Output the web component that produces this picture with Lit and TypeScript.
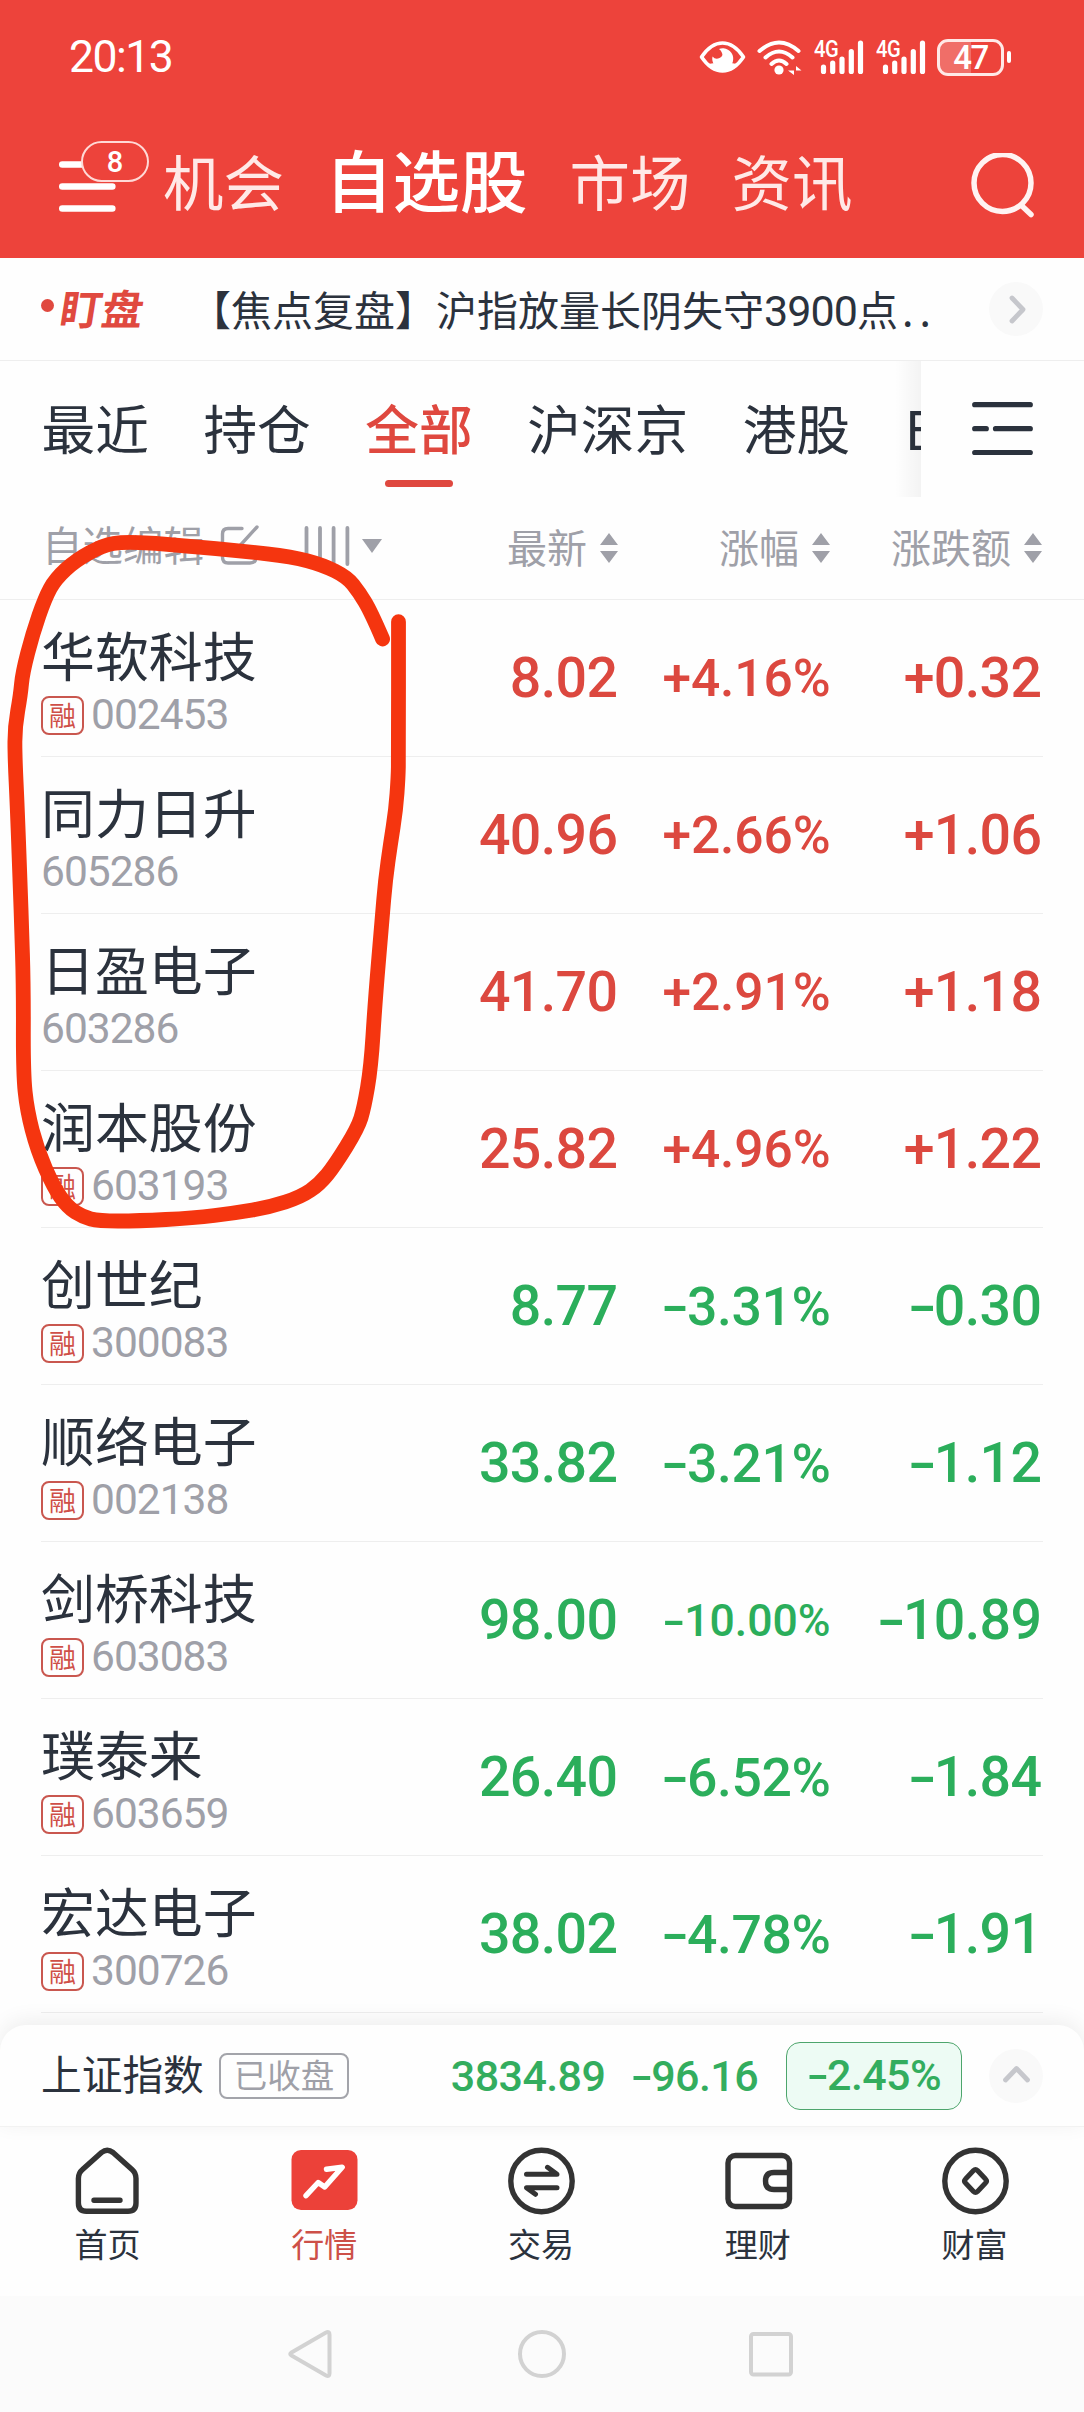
import { LitElement, html, css, svg, nothing } from "lit";
import { customElement, property } from "lit/decorators.js";
import { classMap } from "lit/directives/class-map.js";

interface Stock {
  name: string;
  code: string;
  margin: boolean;
  price: string;
  pct: string;
  diff: string;
}

const STOCKS: Stock[] = [
  { name: "华软科技", code: "002453", margin: true, price: "8.02", pct: "+4.16%", diff: "+0.32" },
  { name: "同力日升", code: "605286", margin: false, price: "40.96", pct: "+2.66%", diff: "+1.06" },
  { name: "日盈电子", code: "603286", margin: false, price: "41.70", pct: "+2.91%", diff: "+1.18" },
  { name: "润本股份", code: "603193", margin: true, price: "25.82", pct: "+4.96%", diff: "+1.22" },
  { name: "创世纪", code: "300083", margin: true, price: "8.77", pct: "-3.31%", diff: "-0.30" },
  { name: "顺络电子", code: "002138", margin: true, price: "33.82", pct: "-3.21%", diff: "-1.12" },
  { name: "剑桥科技", code: "603083", margin: true, price: "98.00", pct: "-10.00%", diff: "-10.89" },
  { name: "璞泰来", code: "603659", margin: true, price: "26.40", pct: "-6.52%", diff: "-1.84" },
  { name: "宏达电子", code: "300726", margin: true, price: "38.02", pct: "-4.78%", diff: "-1.91" },
];

/* Freehand marker points, in page coordinates. */
const MARKER: [number, number][] = [
  [382.6, 639], [371, 612], [359, 592], [347, 577], [323, 565], [292, 556.7], [242, 551], [190, 546.3],
  [155.5, 543.3], [123, 542], [103.7, 545], [76, 560], [55.3, 579], [45, 598], [32.8, 633.3],
  [22.5, 673], [20.5, 695], [14.9, 726.7], [14.9, 757], [17.3, 807], [20.7, 900], [21.4, 920],
  [23.5, 987], [23.2, 1073], [27, 1110], [37.3, 1150], [53.6, 1187], [67.4, 1207], [83, 1217],
  [98.5, 1221], [138, 1221], [193.6, 1218], [235, 1213], [270, 1207], [300.7, 1197], [319.7, 1184],
  [335, 1165], [357.8, 1128], [364, 1108], [371, 1067], [375, 1003], [382, 920], [385.4, 880],
  [390.6, 843], [395.8, 810], [398.2, 777], [398.5, 757], [398.5, 621.7],
];

function smooth(points: [number, number][]): string {
  let d = `M${points[0][0]} ${points[0][1]}`;
  for (let i = 1; i < points.length - 1; i++) {
    const [x, y] = points[i];
    const [nx, ny] = points[i + 1];
    d += `Q${x} ${y} ${(x + nx) / 2} ${(y + ny) / 2}`;
  }
  const last = points[points.length - 1];
  return d + `L${last[0]} ${last[1]}`;
}

const CJK = css`"Noto Sans CJK SC", sans-serif`;
const NUM = css`Roboto, "Noto Sans CJK SC", sans-serif`;

/* The hyphen is widened so that it reads as a minus sign. */
const MINUS = css`
  .minus { display: inline-block; margin-left: 0.14em; transform: scaleX(1.5); transform-origin: 85% 50%; }
`;

function signed(value: string) {
  return value.startsWith("-") ? html`<span><span class="minus">-</span>${value.slice(1)}</span>` : html`<span>${value}</span>`;
}

@customElement("status-bar")
class StatusBar extends LitElement {
  static styles = css`
    :host { display: flex; align-items: center; height: 114px; padding: 0 73px 0 69px; color: #fff; font-family: ${NUM}; }
    .time { flex: 1; font-size: 44.5px; letter-spacing: -1.5px; line-height: 60px; }
    .eye { margin-right: 11px; }
    .signal { display: flex; align-items: flex-start; height: 36px; position: relative; width: 51px; margin-left: 11px; }
    .gen { position: absolute; left: 1px; top: -2px; font: 500 24px/24px Roboto, sans-serif; letter-spacing: -0.5px; transform: scaleX(0.84); transform-origin: 0 0; }
    .battery { display: flex; align-items: center; margin-left: 11px; }
    .cell { box-sizing: border-box; width: 67px; height: 37px; border: 3px solid #ffe9e7; border-radius: 11px; text-align: center;
      font: 500 33px/32px Roboto, sans-serif; letter-spacing: -1.5px; background: linear-gradient(90deg, #f06e68 31px, transparent 31px); }
    .tip { width: 4px; height: 12px; margin-left: 3px; border-radius: 2px; background: #fff; }
    svg { display: block; }
  `;

  private signal() {
    return html`<div class="signal">
      <svg width="51" height="36" viewBox="0 0 51 36" stroke="#fff" stroke-width="5.2" stroke-linecap="round">
        <path d="M10.5 28v4.4M19.7 24v8.4M29 20v12.4M38.3 12.5v19.9M47.5 4v28.4" />
      </svg>
      <span class="gen">4G</span>
    </div>`;
  }

  render() {
    return html`
      <div class="time">20:13</div>
      <svg class="eye" width="47" height="36" viewBox="0 0 47 36">
        <path d="M2.5 18Q12 4 23.5 4T44.500 18Q35 32 23.500 32T2.500 18Z" fill="none" stroke="#fff" stroke-width="3.600" stroke-linejoin="round" />
        <path d="M20 10a10.500 10.500 0 1 1-6.500 7.500q3 3.500 7 1.500t2.500-5q-.8-2.500-3-4Z" fill="#fff" />
        <path d="M9 25q14.500 12 29 0l-6-1H16Z" fill="#fff" />
      </svg>
      <svg width="45" height="36" viewBox="0 0 45 36" fill="none" stroke="#fff" stroke-width="4" stroke-linecap="round">
        <path d="M2.500 12Q22 -5 41.500 12M8.500 18.500Q22 6.500 35.500 18.500M14.500 25Q22 18 29.500 25" />
        <circle cx="22" cy="31" r="4.600" fill="#fff" stroke="none" />
        <path d="M37 27v9l-6-4.500h6ZM39 36v-9l5.500 4.500H39Z" fill="#fff" stroke="none" />
      </svg>
      ${this.signal()} ${this.signal()}
      <div class="battery"><div class="cell">47</div><div class="tip"></div></div>
    `;
  }
}

@customElement("top-nav")
class TopNav extends LitElement {
  static styles = css`
    :host { display: flex; align-items: center; height: 144px; padding: 0 49px 0 57px; font-family: ${CJK}; color: #ffe9e7; }
    .menu { position: relative; width: 92px; height: 72px; margin-right: 14px; }
    .menu svg { display: block; margin-top: 9px; }
    .badge { position: absolute; left: 24px; top: -9px; box-sizing: border-box; width: 68px; height: 41px; border: 2px solid #ffd9d6;
      border-radius: 21px; background: #ed433b; color: #fff; text-align: center; font: 500 29px/38px Roboto, sans-serif; }
    .item { font-size: 60.5px; line-height: 80px; white-space: nowrap; margin-top: -12px; }
    .i0 { margin-right: 41px; }
    .i1 { margin-right: 42px; font-size: 67.5px; font-weight: 500; color: #fff; margin-top: -16px; }
    .i2 { margin-right: 41px; }
    .search { display: block; margin-left: auto; }
  `;

  render() {
    return html`
      <div class="menu">
        <svg width="62" height="58" viewBox="0 0 62 58" stroke="#fff" stroke-width="6.600" stroke-linecap="round">
          <path d="M5.300 5.500h50M5.300 27.500h50M5.300 49.500h50" />
        </svg>
        <div class="badge">8</div>
      </div>
      ${["机会", "自选股", "市场", "资讯"].map((t, i) => html`<div class="item i${i}">${t}</div>`)}
      <svg class="search" width="66" height="66" viewBox="0 0 66 66" fill="none" stroke="#fff3f2" stroke-linecap="round">
        <circle cx="33.500" cy="30" r="28.500" stroke-width="5.500" />
        <path d="M53 53l9 8.500" stroke-width="5.500" />
      </svg>
    `;
  }
}

@customElement("news-strip")
class NewsStrip extends LitElement {
  static styles = css`
    :host { display: flex; align-items: center; box-sizing: border-box; height: 103px; padding: 0 41px; border-bottom: 1px solid #eee; font-family: ${CJK}; }
    .dot { width: 13px; height: 13px; border-radius: 50%; background: #e0493f; margin: -8px 7px 0 0; }
    .tag { width: 85px; font-size: 41.5px; font-weight: 700; line-height: 60px; color: #e0493f; transform: skewX(-9deg); margin-top: -4px; }
    .text { flex: 1; margin-left: 44px; font-size: 41px; line-height: 60px; color: #2b323d; white-space: nowrap; margin-top: -3px; }
    .num { font-family: Roboto, sans-serif; font-size: 43px; letter-spacing: -0.9px; line-height: 1; }
    .dots { letter-spacing: 6px; margin-left: 4px; }
    svg { display: block; }
  `;

  render() {
    return html`
      <div class="dot"></div>
      <div class="tag">盯盘</div>
      <div class="text">【焦点复盘】沪指放量长阴失守<span class="num">3900</span>点<span class="dots">..</span></div>
      <svg width="54" height="54" viewBox="0 0 54 54" fill="none">
        <circle cx="27" cy="27" r="27" fill="#f9f9f9" />
        <path d="M23 16l11 11.500L23 39" stroke="#c6c7cc" stroke-width="4.800" stroke-linecap="round" stroke-linejoin="round" />
      </svg>
    `;
  }
}

@customElement("group-tabs")
class GroupTabs extends LitElement {
  static styles = css`
    :host { display: flex; height: 136px; font-family: ${CJK}; }
    .scroll { position: relative; display: flex; gap: 54.500px; width: 879.500px; padding-left: 41.500px; overflow: hidden; }
    .scroll::after { content: ""; position: absolute; right: 0; top: 0; width: 26px; height: 100%;
      background: linear-gradient(90deg, rgba(0, 0, 0, 0), rgba(0, 0, 0, 0.045)); }
    .tab { display: flex; flex-direction: column; align-items: center; flex: none; font-size: 53.700px; line-height: 78px; padding-top: 26.5px; color: #2b323d; white-space: nowrap; }
    .tab::after { content: ""; width: 68px; height: 7px; margin-top: 14.5px; border-radius: 4px; }
    .on { color: #df483f; font-weight: 500; }
    .on::after { background: #df483f; }
    .more { display: block; margin: 40px 0 0 49px; }
  `;

  render() {
    return html`
      <div class="scroll">
        ${["最近", "持仓", "全部", "沪深京", "港股", "ETF"].map(
          (t) => html`<div class=${classMap({ tab: true, on: t === "全部" })}>${t}</div>`
        )}
      </div>
      <svg class="more" width="66" height="56" viewBox="0 0 66 56" stroke="#2b323d" stroke-width="5.200" stroke-linecap="round">
        <path d="M4.700 3.700h55.600M4.700 27.700h11.600M25.500 27.700h34.800M4.700 51.500h55.600" />
      </svg>
    `;
  }
}

@customElement("column-head")
class ColumnHead extends LitElement {
  static styles = css`
    :host { display: flex; align-items: center; box-sizing: border-box; height: 103px; padding: 0 42px; border-bottom: 1px solid #eee;
      font-family: ${CJK}; font-size: 40px; line-height: 58px; color: #9fa0a8; white-space: nowrap; }
    .edit { display: flex; align-items: center; flex: 1; font-size: 40.500px; margin-top: -4px; }
    .label { margin-top: -4px; }
    .pen { margin-left: 16px; }
    .bars { margin-left: 44px; }
    .caret { margin-left: 11px; }
    .col { display: flex; align-items: center; justify-content: flex-end; gap: 13px; }
    .c0 { width: 212px; }
    .c1 { width: 212px; }
    .c2 { width: 212px; }
    .col span { margin-top: -4px; }
    svg { display: block; flex: none; }
  `;

  render() {
    return html`
      <div class="edit">
        <span class="label">自选编辑</span>
        <svg class="pen" width="40" height="42" viewBox="0 0 40 42" fill="none" stroke="#9fa0a8" stroke-width="3.400" stroke-linecap="round">
          <path d="M22 3.500H8Q2.500 3.500 2.500 9V32Q2.500 38 8 38H30Q36 38 36 32V24M37 2L16 25" />
        </svg>
        <svg class="bars" width="46" height="42" viewBox="0 0 46 42" stroke="#9fa0a8" stroke-width="3.800" stroke-linecap="round">
          <path d="M2.500 3v36M16 3v36M29.600 3v36M43.400 3v36" />
        </svg>
        <svg class="caret" width="22" height="16" viewBox="0 0 22 16" fill="#9fa0a8"><path d="M1 1h20L11 15Z" /></svg>
      </div>
      ${["最新", "涨幅", "涨跌额"].map(
        (t, i) => html`<div class="col c${i}"><span>${t}</span>
          <svg width="18" height="30" viewBox="0 0 18 30" fill="#9fa0a8"><path d="M0 12L9 0l9 12ZM0 18h18L9 30Z" /></svg></div>`
      )}
    `;
  }
}

@customElement("stock-row")
class StockRow extends LitElement {
  @property({ attribute: false }) stock!: Stock;

  static styles = [
    MINUS,
    css`
      :host { display: block; padding: 0 41px; }
      .row { display: flex; box-sizing: border-box; height: 157px; border-bottom: 1px solid #eee; color: #2bae5b; }
      .row.up { color: #dc483f; }
      .who { flex: 1; padding-top: 14.5px; font-family: ${CJK}; }
      .name { font-size: 53.900px; line-height: 78px; color: #2b323d; }
      .sub { display: flex; align-items: center; height: 40px; margin-top: 2.5px; }
      .tag { box-sizing: border-box; width: 43px; height: 39px; border: 2px solid #c9574f; border-radius: 8px; margin-right: 7px;
        font-size: 27px; line-height: 33px; text-align: center; color: #cf4f47; }
      .code { font: 400 42.500px/40px ${NUM}; letter-spacing: -1px; color: #9fa0a8; }
      .num { display: flex; align-items: center; justify-content: flex-end; box-sizing: border-box; padding: 1.5px 1.5px 0 0;
        font: 500 55.500px/60px ${NUM}; letter-spacing: -0.600px; }
      .price { width: 151px; }
      .pct { width: 213px; font-size: 51.500px; letter-spacing: -0.1px; }
      .diff { width: 211px; }
      .down .pct { font-size: 53.500px; letter-spacing: -0.4px; }
      .row .pct.long { font-size: 44.500px; letter-spacing: 0; }
    `,
  ];

  render() {
    const s = this.stock;
    const up = s.pct.startsWith("+");
    return html`<div class=${classMap({ row: true, up, down: !up })}>
      <div class="who">
        <div class="name">${s.name}</div>
        <div class="sub">${s.margin ? html`<span class="tag">融</span>` : nothing}<span class="code">${s.code}</span></div>
      </div>
      <div class="num price">${s.price}</div>
      <div class=${classMap({ num: true, pct: true, long: s.pct.length > 6 })}>${signed(s.pct)}</div>
      <div class="num diff">${signed(s.diff)}</div>
    </div>`;
  }
}

@customElement("index-bar")
class IndexBar extends LitElement {
  static styles = [
    MINUS,
    css`
      :host { display: flex; align-items: center; box-sizing: border-box; height: 102px; margin-top: 12px; padding: 0 41px; position: relative; background: #fefefe;
        border-radius: 26px 26px 0 0; border-bottom: 1px solid #f2f2f2; box-shadow: 0 -4px 22px rgba(0, 0, 0, 0.070); font-family: ${CJK}; white-space: nowrap; }
      .name { width: 162px; font-size: 40.700px; line-height: 58px; color: #2b323d; margin-top: -5px; }
      .state { box-sizing: border-box; width: 130px; height: 46px; margin-left: 16px; border: 2px solid #a3a4aa; border-radius: 8px;
        font-size: 33.500px; line-height: 38px; text-align: center; color: #9fa0a8; }
      .num { font: 500 43px/60px ${NUM}; color: #33ad5e; letter-spacing: -0.6px; }
      .value { margin-left: auto; }
      .change { margin-left: 26px; }
      .pill { box-sizing: border-box; width: 176px; height: 68px; margin: 0 27px 0 28px; border: 1.500px solid #4da56c; border-radius: 14px;
        background: #edfbf4; text-align: center; line-height: 64px; }
      svg { display: block; }
    `,
  ];

  render() {
    return html`
      <div class="name">上证指数</div>
      <div class="state">已收盘</div>
      <div class="num value">3834.89</div>
      <div class="num change">${signed("-96.16")}</div>
      <div class="num pill">${signed("-2.45%")}</div>
      <svg width="54" height="54" viewBox="0 0 54 54" fill="none">
        <circle cx="27" cy="27" r="27" fill="#f9f9f9" />
        <path d="M16.500 31L27.500 19.500L38.500 31" stroke="#c6c7cc" stroke-width="4.800" stroke-linecap="round" stroke-linejoin="round" />
      </svg>
    `;
  }
}

const TAB_ICONS = [
  { label: "首页", icon: svg`<path d="M6.400 33.500Q6.400 28 10.500 24.500L29.500 7.500Q35.200 3 41 7.500L60 24.500Q64 28 64 33.500V58Q64 66.300 56 66.300H14.400Q6.400 66.300 6.400 58ZM22 55.300H48" />` },
  { label: "行情", icon: svg`<rect x="2.500" y="5" width="66" height="60" rx="9.500" fill="#ec4139" stroke="none" /><path d="M17 50.700L29.200 37.500L35.700 42L53.200 22.300L37.500 24.300" stroke="#fff" />` },
  { label: "交易", icon: svg`<circle cx="35.500" cy="36" r="30.700" /><path d="M20.500 29.300H51L41.500 22.300M51 42.700H20.500L29.500 49.300" stroke-width="5" />` },
  { label: "理财", icon: svg`<rect x="5" y="10.500" width="61.500" height="51" rx="7.500" /><path d="M66 27.500H51Q42.500 27.500 42.500 36T51 44.500H66" stroke-linecap="butt" />` },
  { label: "财富", icon: svg`<circle cx="35.500" cy="36" r="30.700" /><path d="M33.500 25.500Q35.500 23.500 37.500 25.500L45.500 34Q47.500 36 45.500 38L37.500 46.500Q35.500 48.500 33.500 46.500L25.500 38Q23.500 36 25.500 34Z" stroke-width="5" />` },
];

@customElement("tab-bar")
class TabBar extends LitElement {
  static styles = css`
    :host { display: grid; grid-template-columns: repeat(5, 1fr); height: 169px; background: #fefefe; font-family: ${CJK}; }
    .tab { display: flex; flex-direction: column; align-items: center; padding-top: 18px; font-size: 33px; line-height: 46px; color: #2b323d; }
    .label { margin-right: 2px; }
    .on { color: #cd5048; }
    svg { display: block; margin-bottom: 3px; }
  `;

  render() {
    return html`${TAB_ICONS.map(
      (t) => html`<div class=${classMap({ tab: true, on: t.label === "行情" })}>
        <svg width="72" height="72" viewBox="0 0 72 72" fill="none" stroke="#333" stroke-width="5.400" stroke-linecap="round" stroke-linejoin="round">${t.icon}</svg>
        <span class="label">${t.label}</span>
      </div>`
    )}`;
  }
}

@customElement("system-nav")
class SystemNav extends LitElement {
  static styles = css`
    :host { display: flex; justify-content: center; align-items: center; gap: 178px; box-sizing: border-box; height: 116px; background: #fbfbfb; }
    svg { display: block; }
  `;

  render() {
    return html`
      ${[
        svg`<path d="M40 4.500Q43.500 3 43.500 6.500V45.500Q43.500 49 40 47.500L5.500 27.500Q3 26 5.500 24.500Z" />`,
        svg`<circle cx="26" cy="26" r="22" />`,
        svg`<rect x="5" y="6" width="40" height="40.500" rx="2.500" />`,
      ].map((s) => html`<svg width="52" height="52" viewBox="0 0 52 52" fill="none" stroke="#d2d2d2" stroke-width="4">${s}</svg>`)}
    `;
  }
}

@customElement("app-root")
class AppRoot extends LitElement {
  static styles = css`
    :host { display: block; position: relative; width: 1084px; height: 2412px; overflow: hidden; background: #fefefe; }
    .head { background: #ed433b; }
    .marker { position: absolute; left: 0; top: 0; pointer-events: none; }
  `;

  render() {
    return html`
      <div class="head" lang="zh-CN"><status-bar></status-bar><top-nav></top-nav></div>
      <news-strip></news-strip>
      <group-tabs></group-tabs>
      <column-head></column-head>
      ${STOCKS.map((s) => html`<stock-row .stock=${s}></stock-row>`)}
      <index-bar></index-bar>
      <tab-bar></tab-bar>
      <system-nav></system-nav>
      <svg class="marker" width="420" height="1240" viewBox="0 0 420 1240" fill="none" stroke="#f5350f" stroke-width="14.800" stroke-linecap="round" stroke-linejoin="round">
        <path d=${smooth(MARKER)} />
      </svg>
    `;
  }
}
